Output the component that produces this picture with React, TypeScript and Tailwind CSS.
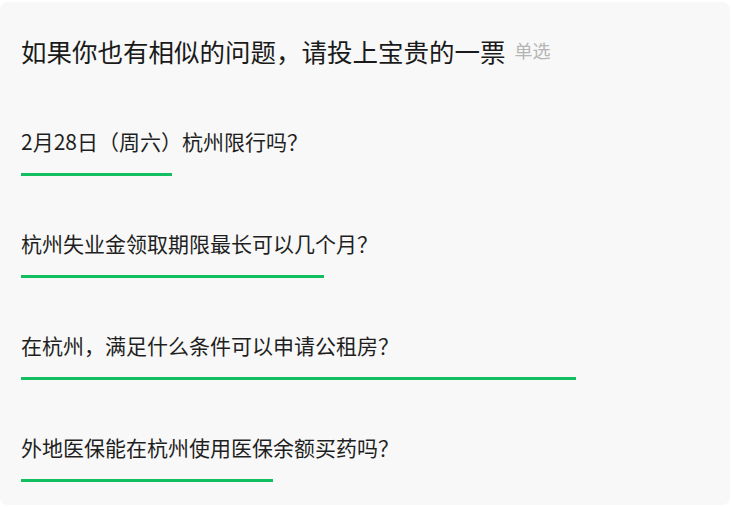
import React from "react";

const items = [
  { q: "2月28日（周六）杭州限行吗？", w: 151 },
  { q: "杭州失业金领取期限最长可以几个月？", w: 303 },
  { q: "在杭州，满足什么条件可以申请公租房？", w: 555 },
  { q: "外地医保能在杭州使用医保余额买药吗？", w: 252 },
];

export default function App() {
  return (
    <div
      className="w-[732px] h-[507px] bg-white pt-[2px] pr-[2px]"
      style={{ fontFamily: '"Noto Sans CJK SC", "Noto Sans", sans-serif' }}
    >
      <div className="h-[503px] rounded-[8px] bg-[#f8f8f8] pl-[21px] pt-[31px]">
        <div className="flex items-center h-[36px] leading-[36px]">
          <span className="text-[25.5px] text-[#1a1a1a]">如果你也有相似的问题，请投上宝贵的一票</span>
          <span className="ml-[9px] text-[18px] leading-[30px] text-[#b5b5b5] -translate-y-[1px]">单选</span>
        </div>
        <div className="flex flex-col gap-[52px] mt-[57px]">
          {items.map((it) => (
            <div key={it.q} className="flex flex-col">
              <div className="h-[30px] leading-[30px] text-[21px] text-[#1f1f1f]">{it.q}</div>
              <div className="mt-[17px] h-[3px] bg-[#12bf60]" style={{ width: it.w }} />
            </div>
          ))}
        </div>
      </div>
    </div>
  );
}
